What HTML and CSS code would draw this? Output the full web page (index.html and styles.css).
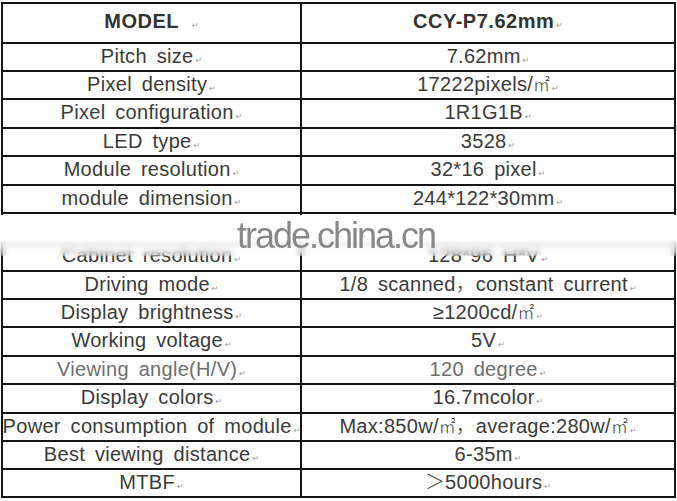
FILE: index.html
```html
<!DOCTYPE html>
<html>
<head>
<meta charset="utf-8">
<link rel="stylesheet" href="styles.css">
</head>
<body>
<div class="sheet">
  <div class="spec">
    <div class="c head"><span>MODEL<i class="pm wide">↵</i></span></div>
    <div class="c head"><span>CCY-P7.62mm<i class="pm">↵</i></span></div>

    <div class="c"><span>Pitch size<i class="pm">↵</i></span></div>
    <div class="c"><span>7.62mm<i class="pm">↵</i></span></div>

    <div class="c"><span>Pixel density<i class="pm">↵</i></span></div>
    <div class="c"><span>17222pixels/<b class="u">㎡</b><i class="pm">↵</i></span></div>

    <div class="c"><span>Pixel configuration<i class="pm">↵</i></span></div>
    <div class="c"><span>1R1G1B<i class="pm">↵</i></span></div>

    <div class="c"><span>LED type<i class="pm">↵</i></span></div>
    <div class="c"><span>3528<i class="pm">↵</i></span></div>

    <div class="c"><span>Module resolution<i class="pm">↵</i></span></div>
    <div class="c"><span>32*16 pixel<i class="pm">↵</i></span></div>

    <div class="c"><span>module dimension<i class="pm">↵</i></span></div>
    <div class="c"><span>244*122*30mm<i class="pm">↵</i></span></div>

    <div class="c"></div>
    <div class="c"></div>

    <div class="c"><span>Cabinet resolution<i class="pm">↵</i></span></div>
    <div class="c"><span>128*96 H*V<i class="pm">↵</i></span></div>

    <div class="c"><span>Driving mode<i class="pm">↵</i></span></div>
    <div class="c"><span>1/8 scanned<b class="cjk">，</b>constant current<i class="pm">↵</i></span></div>

    <div class="c"><span>Display brightness<i class="pm">↵</i></span></div>
    <div class="c"><span>≥1200cd/<b class="u">㎡</b><i class="pm">↵</i></span></div>

    <div class="c"><span>Working voltage<i class="pm">↵</i></span></div>
    <div class="c"><span>5V<i class="pm">↵</i></span></div>

    <div class="c light"><span>Viewing angle(H/V)<i class="pm">↵</i></span></div>
    <div class="c light"><span>120 degree<i class="pm">↵</i></span></div>

    <div class="c"><span>Display colors<i class="pm">↵</i></span></div>
    <div class="c"><span>16.7mcolor<i class="pm">↵</i></span></div>

    <div class="c"><span>Power consumption of module<i class="pm">↵</i></span></div>
    <div class="c"><span>Max:850w/<b class="u">㎡</b><b class="cjk">，</b>average:280w/<b class="u">㎡</b><i class="pm">↵</i></span></div>

    <div class="c"><span>Best viewing distance<i class="pm">↵</i></span></div>
    <div class="c"><span>6-35m<i class="pm">↵</i></span></div>

    <div class="c"><span>MTBF<i class="pm">↵</i></span></div>
    <div class="c"><span><b class="cjk">＞</b>5000hours<i class="pm">↵</i></span></div>
  </div>

  <div class="band"></div>
  <div class="mark">trade.china.cn</div>
</div>
</body>
</html>
```
FILE: styles.css
```css
html, body {
  margin: 0;
  padding: 0;
  background: #fff;
}

.sheet {
  position: relative;
  width: 677px;
  height: 501px;
  box-sizing: border-box;
  padding: 2px 0 0 1px;
  overflow: hidden;
}

.spec {
  display: grid;
  grid-template-columns: 297px 372px;
  grid-template-rows: 38px 26px 26px 27px 26px 27px 26px 27px 27px 26px 26px 27px 26px 27px 26px 26px 26px;
  gap: 2px;
  padding: 2px;
  width: max-content;
  background: #151515;
}

.c {
  background: #fff;
  display: flex;
  align-items: center;
  justify-content: center;
  white-space: nowrap;
  font-family: "Liberation Sans", Arial, sans-serif;
  font-size: 20px;
  letter-spacing: 0.3px;
  word-spacing: 4px;
  color: #3a3a3a;
}

.c span {
  display: block;
  line-height: 26px;
  padding-top: 2px;
}

.head {
  font-weight: bold;
  letter-spacing: 0.5px;
  color: #333;
}

.head span {
  padding-top: 0;
}

.light {
  color: #6e6e6e;
}

.pm {
  font-style: normal;
  font-weight: normal;
  font-family: "DejaVu Sans", sans-serif;
  font-size: 8px;
  color: #9a9a9a;
  letter-spacing: 0;
  margin-left: 2px;
}

.pm.wide {
  margin-left: 13px;
}

.u {
  font-weight: 300;
  font-family: "Noto Sans CJK SC", sans-serif;
  font-size: 17px;
  line-height: 1;
  letter-spacing: 0;
}

.cjk {
  font-weight: 300;
  font-family: "Noto Sans CJK SC", sans-serif;
  line-height: 1;
  letter-spacing: 0;
}

.band {
  position: absolute;
  left: 0;
  top: 215px;
  width: 677px;
  height: 41px;
  backdrop-filter: blur(3px);
  background: linear-gradient(to bottom, #fff 0, #fff 58%, rgba(255,255,255,0.55) 80%, rgba(255,255,255,0.1) 100%);
}

.mark {
  position: absolute;
  left: 237px;
  top: 212px;
  font-family: "Liberation Sans", Arial, sans-serif;
  font-size: 36px;
  letter-spacing: -2px;
  line-height: 48px;
  color: #888;
}
```
